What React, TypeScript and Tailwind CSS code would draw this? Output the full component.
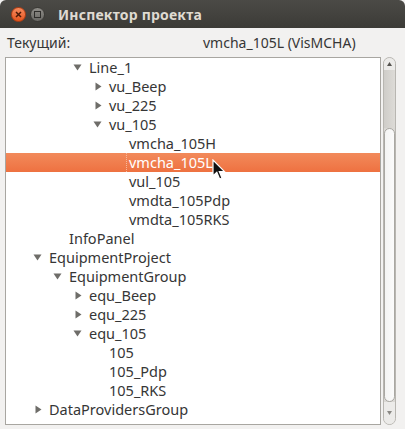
import React from 'react'

type Node = { label: string; level: number; arrow?: 'open' | 'closed'; selected?: boolean }

const rows: Node[] = [
  { label: 'Line_1', level: 2, arrow: 'open' },
  { label: 'vu_Beep', level: 3, arrow: 'closed' },
  { label: 'vu_225', level: 3, arrow: 'closed' },
  { label: 'vu_105', level: 3, arrow: 'open' },
  { label: 'vmcha_105H', level: 4 },
  { label: 'vmcha_105L', level: 4, selected: true },
  { label: 'vul_105', level: 4 },
  { label: 'vmdta_105Pdp', level: 4 },
  { label: 'vmdta_105RKS', level: 4 },
  { label: 'InfoPanel', level: 1 },
  { label: 'EquipmentProject', level: 0, arrow: 'open' },
  { label: 'EquipmentGroup', level: 1, arrow: 'open' },
  { label: 'equ_Beep', level: 2, arrow: 'closed' },
  { label: 'equ_225', level: 2, arrow: 'closed' },
  { label: 'equ_105', level: 2, arrow: 'open' },
  { label: '105', level: 3 },
  { label: '105_Pdp', level: 3 },
  { label: '105_RKS', level: 3 },
  { label: 'DataProvidersGroup', level: 0, arrow: 'closed' },
]

const Expander = ({ kind }: { kind?: 'open' | 'closed' }) => (
  <span className="w-[20px] h-full flex items-center shrink-0">
    {kind === 'open' && (
      <svg width="9" height="9" viewBox="0 0 9 9" className="ml-[4px]">
        <path d="M0.5 1.5 L8.5 1.5 L4.5 7.5 Z" fill="#6e6d69" />
      </svg>
    )}
    {kind === 'closed' && (
      <svg width="9" height="9" viewBox="0 0 9 9" className="ml-[5px]">
        <path d="M1.5 0.5 L7.5 4.5 L1.5 8.5 Z" fill="#6e6d69" />
      </svg>
    )}
  </span>
)

const TreeRow = ({ node }: { node: Node }) => (
  <div
    className={
      'h-[19px] flex items-center ' +
      (node.selected ? 'bg-gradient-to-b from-[#f28a5b] to-[#ee7140] text-white' : 'text-[#363636]')
    }
    style={{ paddingLeft: 23 + node.level * 20 }}
  >
    <Expander kind={node.arrow} />
    <span
      className={
        'leading-[19px] ' +
        (node.selected ? 'border-l border-dotted border-[#f7b89c] pl-[2px] -ml-[3px]' : '')
      }
    >
      {node.label}
    </span>
  </div>
)

const Scrollbar = () => (
  <div className="w-[13px] ml-[2px] flex flex-col rounded-full border border-[#b8b6b1] bg-[#dad8d4] overflow-hidden">
    <div className="h-[12px] flex items-center justify-center bg-[#ecebe9] shrink-0">
      <svg width="5" height="4" viewBox="0 0 5 4">
        <path d="M0 4 L2.5 0 L5 4 Z" fill="#55534f" />
      </svg>
    </div>
    <div className="h-[58px] bg-gradient-to-r from-[#cfcdc9] to-[#dddbd7] shrink-0" />
    <div className="flex-1 rounded-full border border-[#a9a7a2] bg-gradient-to-r from-[#f4f4f3] to-[#fbfbfb]" />
    <div className="h-[22px] flex items-center justify-center bg-[#ecebe9] shrink-0">
      <svg width="5" height="4" viewBox="0 0 5 4">
        <path d="M0 0 L5 0 L2.5 4 Z" fill="#8a8884" />
      </svg>
    </div>
  </div>
)

const Cursor = () => (
  <svg width="14" height="22" viewBox="0 0 14 22" className="absolute left-[212px] top-[159px]">
    <path d="M1 1 L1 17 L4.8 13.4 L7.6 20 L10 19 L7.3 12.6 L12.5 12.6 Z" fill="#111" stroke="#fff" strokeWidth="1.2" />
  </svg>
)

export default function App() {
  return (
    <div
      className="relative w-[405px] h-[429px] bg-[#f2f1f0] flex flex-col text-[14px] overflow-hidden"
      style={{ fontFamily: '"Noto Sans", "Open Sans", "DejaVu Sans", sans-serif' }}
    >
      <div className="h-[28px] shrink-0 flex items-center rounded-t-[6px] bg-gradient-to-b from-[#4b4a46] to-[#3c3b37]">
        <div className="ml-[11px] w-[15px] h-[15px] rounded-full bg-gradient-to-b from-[#f68a5c] to-[#e4541b] border border-[#b43d12] flex items-center justify-center">
          <svg width="7" height="7" viewBox="0 0 7 7">
            <path d="M1 1 L6 6 M6 1 L1 6" stroke="#4a1a08" strokeWidth="1.5" />
          </svg>
        </div>
        <div className="ml-[4px] w-[15px] h-[15px] rounded-full bg-gradient-to-b from-[#8e8c87] to-[#6a6965] border border-[#3a3935] flex items-center justify-center">
          <div className="w-[7px] h-[7px] border border-[#2e2d2a]" />
        </div>
        <span className="ml-[13px] text-[14px] font-bold text-[#dfdbd2] tracking-[0.2px]">Инспектор проекта</span>
      </div>
      <div className="flex-1 flex flex-col px-[5px] pb-[4px]">
        <div className="h-[29px] shrink-0 flex items-center text-[#363636]">
          <span className="pl-[2px] w-[198px]">Текущий:</span>
          <span>vmcha_105L (VisMCHA)</span>
        </div>
        <div className="flex-1 flex pr-[4px]">
          <div className="flex-1 border border-[#a8a6a1] bg-white overflow-hidden text-[14.5px]">
            {rows.map(r => (
              <TreeRow key={r.label} node={r} />
            ))}
          </div>
          <Scrollbar />
        </div>
      </div>
      <Cursor />
    </div>
  )
}
